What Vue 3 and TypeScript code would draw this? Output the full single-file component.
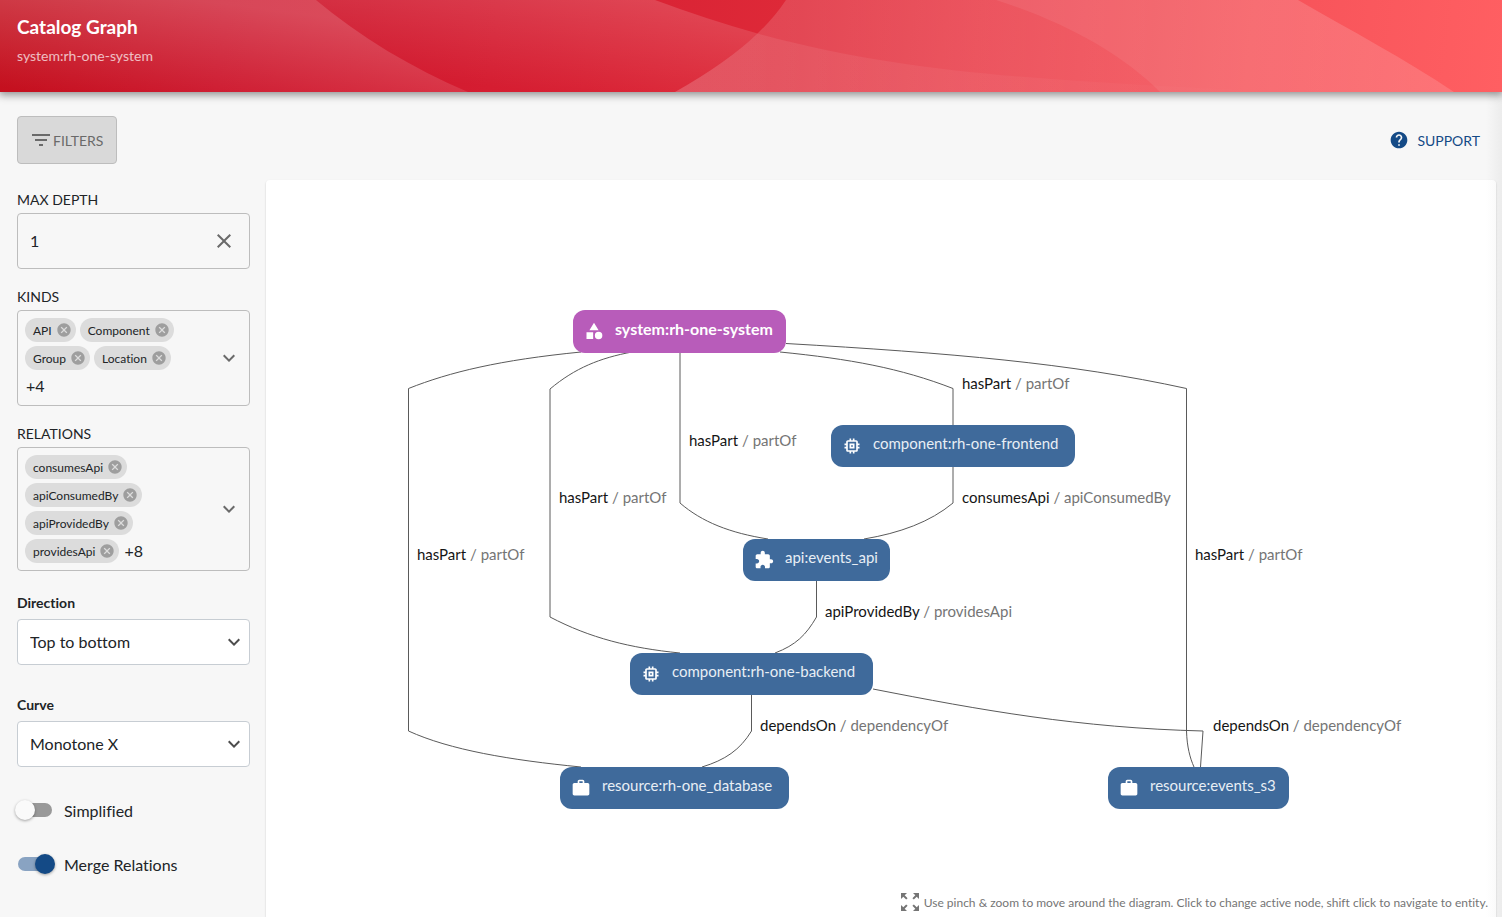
<script setup lang="ts">
import { ref } from 'vue'

interface GraphNode {
  x: number
  y: number
  width: number
  height: number
  icon: string
  label: string
  active?: boolean
}

interface EdgeLabel {
  x: number
  y: number
  from: string
  to: string
}

const depth = ref('1')
const direction = ref('Top to bottom')
const curve = ref('Monotone X')
const simplified = ref(false)
const merge = ref(true)

const kinds = ['API', 'Component', 'Group', 'Location']
const relations = ['consumesApi', 'apiConsumedBy', 'apiProvidedBy', 'providesApi']

const icons: Record<string, string> = {
  system: 'M12 2l-5.5 9h11z M17.5 13a4.5 4.5 0 1 0 0 9a4.5 4.5 0 1 0 0-9z M3 13.5h8v8H3z',
  component:
    'M15 9H9v6h6V9zm-2 4h-2v-2h2v2zm8-2V9h-2V7c0-1.100-.9-2-2-2h-2V3h-2v2h-2V3H9v2H7c-1.100 0-2 .9-2 2v2H3v2h2v2H3v2h2v2c0 1.100.9 2 2 2h2v2h2v-2h2v2h2v-2h2c1.100 0 2-.9 2-2v-2h2v-2h-2v-2h2zm-4 6H7V7h10v10z',
  api: 'M20.500 11H19V7c0-1.100-.9-2-2-2h-4V3.500C13 2.120 11.880 1 10.500 1S8 2.120 8 3.500V5H4c-1.100 0-1.990.9-1.990 2v3.800H3.500c1.490 0 2.700 1.210 2.700 2.700s-1.210 2.700-2.700 2.700H2V20c0 1.100.9 2 2 2h3.800v-1.500c0-1.490 1.210-2.700 2.700-2.700 1.490 0 2.700 1.210 2.700 2.700V22H17c1.100 0 2-.9 2-2v-4h1.500c1.380 0 2.500-1.120 2.500-2.500S21.880 11 20.500 11z',
  resource:
    'M20 6h-4V4c0-1.110-.89-2-2-2h-4c-1.110 0-2 .89-2 2v2H4c-1.110 0-1.990.89-1.990 2L2 19c0 1.110.89 2 2 2h16c1.110 0 2-.89 2-2V8c0-1.110-.89-2-2-2zm-6 0h-4V4h4v2z',
}

const nodes: GraphNode[] = [
  { x: 573, y: 310, width: 213, height: 43, icon: 'system', label: 'system:rh-one-system', active: true },
  { x: 831, y: 425, width: 244, height: 42, icon: 'component', label: 'component:rh-one-frontend' },
  { x: 743, y: 539, width: 147, height: 42, icon: 'api', label: 'api:events_api' },
  { x: 630, y: 653, width: 243, height: 42, icon: 'component', label: 'component:rh-one-backend' },
  { x: 560, y: 767, width: 229, height: 42, icon: 'resource', label: 'resource:rh-one_database' },
  { x: 1108, y: 767, width: 181, height: 42, icon: 'resource', label: 'resource:events_s3' },
]

const edges = [
  'M581 352C500 360 450 372 408.500 388.500V731C450 750 510 760 581 767',
  'M632 352C600 358 575 368 550 389V617C590 638 630 648 680 653',
  'M680 352V503C702 522 730 533 768 539',
  'M780 352C850 359 900 368 953 388.500V425',
  'M953 467V503C930 522 900 533 864 539',
  'M816.500 581V617C806 635 796 645 775 653',
  'M751.500 695V731C740 750 725 760 702 767',
  'M786 343.500C950 353 1070 363 1186.500 388.500V731C1187 747 1190 758 1194 767',
  'M873 689C980 710 1080 728 1203 731L1200.500 767',
]

const edgeLabels: EdgeLabel[] = [
  { x: 962, y: 389, from: 'hasPart', to: 'partOf' },
  { x: 689, y: 446, from: 'hasPart', to: 'partOf' },
  { x: 559, y: 503, from: 'hasPart', to: 'partOf' },
  { x: 962, y: 503, from: 'consumesApi', to: 'apiConsumedBy' },
  { x: 417, y: 560, from: 'hasPart', to: 'partOf' },
  { x: 1195, y: 560, from: 'hasPart', to: 'partOf' },
  { x: 825, y: 617, from: 'apiProvidedBy', to: 'providesApi' },
  { x: 760, y: 731, from: 'dependsOn', to: 'dependencyOf' },
  { x: 1213, y: 731, from: 'dependsOn', to: 'dependencyOf' },
]
</script>

<template>
  <div class="page">
    <header class="banner">
      <svg class="waves" viewBox="0 0 1502 92" preserveAspectRatio="none" aria-hidden="true">
        <defs>
          <linearGradient id="w1" x1="100" y1="100" x2="114" y2="-10" gradientUnits="userSpaceOnUse">
            <stop offset="0" stop-color="#fff" stop-opacity="0" />
            <stop offset="1" stop-color="#fff" stop-opacity="0.22" />
          </linearGradient>
          <linearGradient id="w2" x1="540" y1="92" x2="550" y2="-8" gradientUnits="userSpaceOnUse">
            <stop offset="0" stop-color="#fff" stop-opacity="0" />
            <stop offset="1" stop-color="#fff" stop-opacity="0.15" />
          </linearGradient>
          <linearGradient id="w3" x1="675" y1="0" x2="1454" y2="0" gradientUnits="userSpaceOnUse">
            <stop offset="0" stop-color="#fff" stop-opacity="0.15" />
            <stop offset="1" stop-color="#fff" stop-opacity="0.08" />
          </linearGradient>
          <linearGradient id="w4" x1="758" y1="0" x2="1280" y2="0" gradientUnits="userSpaceOnUse">
            <stop offset="0" stop-color="#fff" stop-opacity="0.08" />
            <stop offset="1" stop-color="#fff" stop-opacity="0" />
          </linearGradient>
        </defs>
        <path fill="url(#w1)" d="M0 0H316C360 37 412 68 468 92H0z" />
        <path fill="url(#w2)" d="M316 0H655Q706 19 757.5 33.5Q728 62 675 92H468C412 68 360 37 316 0z" />
        <path fill="url(#w3)" d="M786 0H1298C1350 30 1405 59 1454 92H675Q728 62 757.5 33.5Q774 18 786 0z" />
        <path fill="#fff" fill-opacity="0.07" d="M996 0H1298C1350 30 1405 59 1454 92H1160C1122 54 1067 23 996 0z" />
        <path fill="url(#w4)" d="M757.5 33.5C890 70 1020 78 1160 86L1280 92H675Q728 62 757.5 33.5z" />
      </svg>
      <h1>Catalog Graph</h1>
      <p>system:rh-one-system</p>
    </header>

    <main class="content">
      <div class="toolbar">
        <button class="filters" type="button">
          <svg width="24" height="24" viewBox="0 0 24 24" aria-hidden="true">
            <path d="M10 18h4v-2h-4v2zM3 6v2h18V6H3zm3 7h12v-2H6v2z" />
          </svg>
          Filters
        </button>
        <button class="support" type="button">
          <svg width="20" height="20" viewBox="0 0 24 24" aria-hidden="true">
            <path
              d="M12 2C6.480 2 2 6.480 2 12s4.480 10 10 10 10-4.480 10-10S17.520 2 12 2zm1 17h-2v-2h2v2zm2.070-7.750l-.9.920C13.450 12.900 13 13.500 13 15h-2v-.5c0-1.100.450-2.100 1.170-2.830l1.240-1.260c.370-.360.590-.860.590-1.410 0-1.100-.9-2-2-2s-2 .9-2 2H8c0-2.210 1.790-4 4-4s4 1.790 4 4c0 .880-.360 1.680-.930 2.250z"
            />
          </svg>
          Support
        </button>
      </div>

      <div class="layout">
        <aside class="sidebar">
          <div class="field">
            <label class="caption" for="depth">Max Depth</label>
            <div class="box depth">
              <input id="depth" v-model="depth" type="text" inputmode="numeric" />
              <button class="icon-button" type="button" aria-label="clear" @click="depth = ''">
                <svg width="24" height="24" viewBox="0 0 24 24" aria-hidden="true">
                  <path
                    d="M19 6.410L17.590 5 12 10.590 6.410 5 5 6.410 10.590 12 5 17.590 6.410 19 12 13.410 17.590 19 19 17.590 13.410 12z"
                  />
                </svg>
              </button>
            </div>
          </div>

          <div class="field" role="group" aria-labelledby="kinds">
            <span id="kinds" class="caption">Kinds</span>
            <div class="box">
              <div class="chips">
                <span v-for="kind in kinds" :key="kind" class="chip">
                  {{ kind }}
                  <button type="button" :aria-label="'Remove ' + kind">
                    <svg width="16" height="16" viewBox="0 0 24 24" aria-hidden="true">
                      <path
                        d="M12 2C6.470 2 2 6.470 2 12s4.470 10 10 10 10-4.470 10-10S17.530 2 12 2zm5 13.590L15.590 17 12 13.410 8.410 17 7 15.590 10.590 12 7 8.410 8.410 7 12 10.590 15.590 7 17 8.410 13.410 12 17 15.590z"
                      />
                    </svg>
                  </button>
                </span>
                <span class="more">+4</span>
              </div>
              <button class="icon-button" type="button" aria-label="Open kinds">
                <svg width="24" height="24" viewBox="0 0 24 24" aria-hidden="true">
                  <path d="M16.590 8.590L12 13.170 7.410 8.590 6 10l6 6 6-6z" />
                </svg>
              </button>
            </div>
          </div>

          <div class="field" role="group" aria-labelledby="relations">
            <span id="relations" class="caption">Relations</span>
            <div class="box">
              <div class="chips">
                <span v-for="relation in relations" :key="relation" class="chip">
                  {{ relation }}
                  <button type="button" :aria-label="'Remove ' + relation">
                    <svg width="16" height="16" viewBox="0 0 24 24" aria-hidden="true">
                      <path
                        d="M12 2C6.470 2 2 6.470 2 12s4.470 10 10 10 10-4.470 10-10S17.530 2 12 2zm5 13.590L15.590 17 12 13.410 8.410 17 7 15.590 10.590 12 7 8.410 8.410 7 12 10.590 15.590 7 17 8.410 13.410 12 17 15.590z"
                      />
                    </svg>
                  </button>
                </span>
                <span class="more">+8</span>
              </div>
              <button class="icon-button" type="button" aria-label="Open relations">
                <svg width="24" height="24" viewBox="0 0 24 24" aria-hidden="true">
                  <path d="M16.590 8.590L12 13.170 7.410 8.590 6 10l6 6 6-6z" />
                </svg>
              </button>
            </div>
          </div>

          <div class="select-field">
            <label for="direction">Direction</label>
            <div class="select">
              <select id="direction" v-model="direction">
                <option>Top to bottom</option>
                <option>Bottom to top</option>
                <option>Left to right</option>
                <option>Right to left</option>
              </select>
              <svg width="24" height="24" viewBox="0 0 24 24" aria-hidden="true">
                <path d="M16.590 8.590L12 13.170 7.410 8.590 6 10l6 6 6-6z" />
              </svg>
            </div>
          </div>

          <div class="select-field">
            <label for="curve">Curve</label>
            <div class="select">
              <select id="curve" v-model="curve">
                <option>Monotone X</option>
                <option>Step Before</option>
              </select>
              <svg width="24" height="24" viewBox="0 0 24 24" aria-hidden="true">
                <path d="M16.590 8.590L12 13.170 7.410 8.590 6 10l6 6 6-6z" />
              </svg>
            </div>
          </div>

          <div class="switches">
            <label><input v-model="simplified" type="checkbox" role="switch" />Simplified</label>
            <label><input v-model="merge" type="checkbox" role="switch" />Merge Relations</label>
          </div>
        </aside>

        <section class="canvas" aria-label="Catalog relations">
          <svg class="graph" viewBox="266 180 1230 737">
            <path v-for="edge in edges" :key="edge" class="edge" :d="edge" />
            <text v-for="(item, i) in edgeLabels" :key="i" class="edge-label" :x="item.x" :y="item.y">
              <tspan class="from">{{ item.from }}</tspan>
              <tspan> / {{ item.to }}</tspan>
            </text>
            <g
              v-for="node in nodes"
              :key="node.label"
              :class="['node', { active: node.active }]"
              :transform="`translate(${node.x} ${node.y})`"
            >
              <rect :width="node.width" :height="node.height" rx="12" />
              <svg x="11" y="11" width="20" height="20" viewBox="0 0 24 24">
                <path :d="icons[node.icon]" />
              </svg>
              <text x="42" :y="node.active ? 25 : 24">{{ node.label }}</text>
            </g>
          </svg>
          <p class="hint">
            <svg width="24" height="24" viewBox="0 0 24 24" aria-hidden="true">
              <path
                d="M15 3l2.300 2.300-2.890 2.870 1.420 1.420L18.700 6.700 21 9V3zM3 9l2.300-2.300 2.870 2.890 1.420-1.420L6.700 5.300 9 3H3zm6 12l-2.300-2.300 2.890-2.870-1.420-1.420L5.300 17.300 3 15v6zm12-6l-2.300 2.300-2.870-2.890-1.420 1.420 2.890 2.870L15 21h6z"
              />
            </svg>
            Use pinch &amp; zoom to move around the diagram. Click to change active node, shift click to navigate to entity.
          </p>
        </section>
      </div>
    </main>
  </div>
</template>

<style>
body {
  margin: 0;
  overflow: hidden;
  background: #f7f7f7;
}
</style>

<style scoped>
.page {
  display: flex;
  flex-direction: column;
  min-height: 100vh;
  box-sizing: border-box;
  background: linear-gradient(to left, #ececec, #f7f7f7 16px);
  color: #212427;
  font-family: Lato, 'Liberation Sans', sans-serif;
  font-size: 16px;
  font-variant-ligatures: none;
}

.page *,
.page *::before {
  box-sizing: border-box;
}

button,
input,
select {
  font: inherit;
  color: inherit;
}

button {
  padding: 0;
  border: 0;
  background: none;
  cursor: pointer;
}

svg {
  display: block;
  flex: none;
  fill: currentColor;
}

.banner {
  position: relative;
  height: 92px;
  padding: 15px 17px;
  background: linear-gradient(97deg, #c4101e 0%, #cc1329 15%, #d51d31 33%, #de2938 52%, #e93d49 65%, #f65259 83%, #ff5f62 100%);
  box-shadow: 0 2px 8px 1px rgba(0, 0, 0, 0.42);
  color: #fff;
}

.waves {
  position: absolute;
  inset: 0;
  width: 100%;
  height: 100%;
}

.banner h1,
.banner p {
  position: relative;
  margin: 0;
}

.banner h1 {
  font-size: 19px;
  line-height: 24px;
}

.banner p {
  margin-top: 7px;
  font-size: 14px;
  line-height: 20px;
  opacity: 0.7;
}

.content {
  display: flex;
  flex: 1;
  flex-direction: column;
  padding: 24px 6px 0 17px;
}

.toolbar {
  display: flex;
  align-items: center;
  justify-content: space-between;
  margin-bottom: 16px;
  font-size: 14px;
}

.filters,
.support {
  display: flex;
  align-items: center;
  text-transform: uppercase;
}

.filters {
  height: 48px;
  padding: 0 13px 0 11px;
  border: 1px solid #bdbdbd;
  border-radius: 4px;
  background: #d9d9d9;
  color: #6a6a6a;
}

.support {
  gap: 8px;
  padding: 12px 16px;
  color: #144a86;
}

.layout {
  display: grid;
  flex: 1;
  grid-template-columns: 233px 1fr;
  gap: 16px;
}

.sidebar {
  padding-top: 8px;
}

.field {
  margin-bottom: 16px;
}

.caption {
  display: block;
  margin-bottom: 1px;
  font-size: 14px;
  line-height: 24px;
  text-transform: uppercase;
}

.box {
  display: flex;
  align-items: center;
  padding: 5px 8px 5px 5px;
  border: 1px solid #bdbdbd;
  border-radius: 4px;
}

.depth {
  height: 56px;
  padding: 0 13px 0 12px;
}

.depth input {
  flex: 1;
  min-width: 0;
  padding: 0 0 2px;
  border: 0;
  background: none;
}

.icon-button {
  color: #6a6a6a;
}

.chips {
  display: flex;
  flex: 1;
  flex-wrap: wrap;
  padding-right: 24px;
}

.chip {
  display: flex;
  align-items: center;
  gap: 4px;
  height: 24px;
  margin: 2px;
  padding: 0 4px 0 8px;
  border-radius: 12px;
  background: #dcdcdc;
  font-size: 12px;
}

.chip button {
  color: #9e9e9e;
}

.more {
  padding: 0 3px;
  line-height: 28px;
}

.select-field {
  margin-top: 28px;
}

.field + .select-field {
  margin-top: 20px;
}

.select-field label {
  display: block;
  margin-bottom: 4px;
  font-size: 14px;
  font-weight: 700;
  line-height: 24px;
}

.select {
  display: grid;
  align-items: center;
}

.select select,
.select svg {
  grid-area: 1 / 1;
}

.select select {
  width: 100%;
  height: 46px;
  padding: 0 36px 2px 12px;
  border: 1px solid #c7cdd3;
  border-radius: 4px;
  background: #fff;
  appearance: none;
}

.select svg {
  justify-self: end;
  margin-right: 4px;
  color: #4d4d4d;
  pointer-events: none;
}

.switches {
  display: grid;
  gap: 16px;
  margin-top: 24px;
}

.switches label {
  display: flex;
  align-items: center;
  gap: 12px;
  height: 38px;
}

.switches input {
  position: relative;
  width: 34px;
  height: 14px;
  margin: 0 0 0 1px;
  border-radius: 7px;
  background: #999;
  appearance: none;
}

.switches input::before {
  position: absolute;
  top: -3px;
  left: -3px;
  width: 20px;
  height: 20px;
  border-radius: 50%;
  background: #fafafa;
  box-shadow: 0 1px 3px rgba(0, 0, 0, 0.35);
  content: '';
}

.switches input:checked {
  background: #89a3c2;
}

.switches input:checked::before {
  left: 17px;
  background: #144a86;
}

.canvas {
  position: relative;
  border-radius: 4px 4px 0 0;
  background: linear-gradient(to left, #fafafa, #fff 10px);
  box-shadow: 0 1px 2px rgba(0, 0, 0, 0.2);
}

.graph {
  width: 100%;
  height: 100%;
}

.edge {
  fill: none;
  stroke: #5a5a5a;
  stroke-width: 1;
}

.edge-label {
  fill: #757575;
  font-size: 15px;
}

.edge-label .from {
  fill: #151515;
}

.node {
  color: #fff;
}

.node rect {
  fill: #3f6a9b;
}

.node text {
  fill: #e8eef5;
  font-size: 15px;
}

.node.active rect {
  fill: #b85cba;
}

.node.active text {
  fill: #fff;
  font-size: 16px;
  font-weight: 700;
}

.hint {
  position: absolute;
  right: 8px;
  bottom: 3px;
  display: flex;
  align-items: center;
  gap: 2px;
  margin: 0;
  color: #757575;
  font-size: 12px;
}
</style>
